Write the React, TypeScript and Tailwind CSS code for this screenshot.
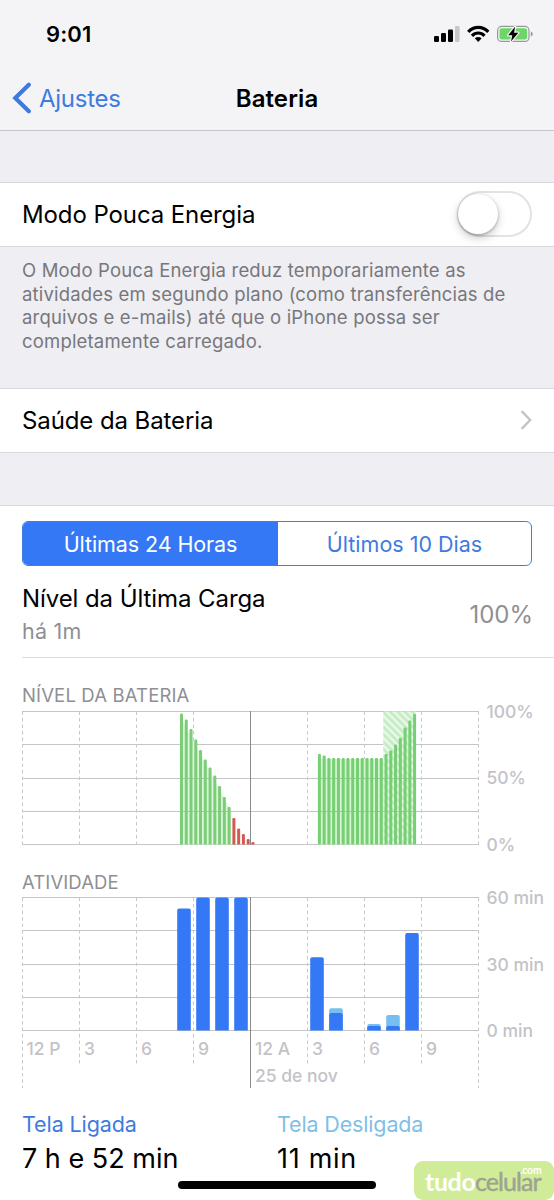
import type { ReactNode } from 'react';

const GRID_X = [22.5, 79.5, 136.5, 193.5, 250.5, 307.5, 364.5, 421.5, 478.5];

const DRAIN = [713.5, 719.5, 729, 739.5, 750, 759.5, 767.5, 775.5, 786, 797, 807];
const LOW = [818, 828.5, 834, 839, 842];
const SECOND = [
  754, 755.5, 758, 758, 758, 758, 758, 758, 758, 758, 758, 758, 758, 758,
  754, 750.5, 744.5, 738, 727.5, 720.5, 714,
];

const ACTIVITY = [
  { x: 177.2, on: 908.5, off: 908.5 },
  { x: 196.2, on: 897.5, off: 897.5 },
  { x: 215.2, on: 897.5, off: 897.5 },
  { x: 234.2, on: 897.5, off: 897.5 },
  { x: 310.2, on: 957.3, off: 957.3 },
  { x: 329.2, on: 1013, off: 1008.3 },
  { x: 367.2, on: 1026, off: 1024 },
  { x: 386.2, on: 1026, off: 1015 },
  { x: 405.2, on: 933, off: 933 },
];

function bar(x: number, y: number, w: number, bottom: number, r: number) {
  const c = Math.min(r, bottom - y);
  return `M${x} ${bottom}V${y + c}Q${x} ${y} ${x + c} ${y}H${x + w - c}Q${x + w} ${y} ${x + w} ${y + c}V${bottom}Z`;
}

function StatusIcons() {
  return (
    <svg className="h-[20px] w-[102px]" viewBox="432 24 102 20">
      <rect x="434" y="36" width="5" height="6" rx="1.3" />
      <rect x="441" y="33" width="5" height="9" rx="1.3" />
      <rect x="448" y="29.5" width="5" height="12.5" rx="1.3" />
      <rect x="455" y="26" width="4.6" height="16" rx="1.3" fill="#c6c6c8" />
      <g fill="none" stroke="#000" strokeWidth="3.2">
        <path d="M468.2 31.8C474 25.8 482.5 25.8 488.3 31.8" />
        <path d="M472 35.8C475.6 32.1 480.9 32.1 484.5 35.8" />
      </g>
      <path d="M474.8 38.3Q478.2 35.8 481.7 38.3L478.2 41.9Z" />
      <rect x="497.6" y="26.4" width="31.4" height="15" rx="4" fill="none" stroke="#98989b" strokeWidth="1.2" />
      <rect x="499.5" y="28.3" width="27.6" height="11.2" rx="2.2" fill="#6cd668" />
      <path d="M530.8 31.5Q532.8 32.2 532.8 34T530.8 36.5Z" fill="#98989b" />
      <path d="M515 26.7L508.2 35.2H512.3L511 41.6L518.4 32.8H514.1Z" stroke="#f4f4f7" strokeWidth="2.4" strokeLinejoin="round" paintOrder="stroke" />
    </svg>
  );
}

function Row({ children, label }: { label: string; children: ReactNode }) {
  return (
    <div className="flex h-[65px] items-center justify-between border-y border-[#d8d8dc] bg-white pr-[22px] pl-[22px]">
      <span className="pt-px text-[24px] tracking-[-0.1px] whitespace-nowrap">{label}</span>
      {children}
    </div>
  );
}

function GridLines({ top, bottom, tail }: { top: number; bottom: number; tail: boolean }) {
  const step = (bottom - top) / 4;
  return (
    <g>
      {[0, 1, 2, 3, 4].map((i) => (
        <path key={i} d={`M22 ${top + Math.round(step * i)}H479`} stroke="#c5c5c8" />
      ))}
      {GRID_X.map((x, i) => {
        const end = !tail ? bottom : i % 4 === 0 ? 1088 : 1063.5;
        return i === 4 ? null : (
          <path key={x} d={`M${x} ${top}V${end}`} stroke="#c8c8cb" strokeDasharray="3.5 3" />
        );
      })}
    </g>
  );
}

function BatteryChart() {
  return (
    <svg className="block h-[150px] w-full overflow-visible" viewBox="0 706 554 150">
      <defs>
        <pattern id="charging" width="5.2" height="5.2" patternUnits="userSpaceOnUse" patternTransform="rotate(-45)">
          <rect width="5.2" height="5.2" fill="#eaf9ea" />
          <rect width="2.9" height="5.2" fill="#c5ecc5" />
        </pattern>
      </defs>
      <GridLines top={711.5} bottom={844.5} tail={false} />
      <path d="M250.5 711V845" stroke="#8a8a8d" />
      <path d="M383.3 711.5H415.8V844.5H383.3Z" fill="url(#charging)" />
      <path d="M181 844.5V718L231 811V844.5Z" fill="#dcf7da" />
      <path d="M318 844.5V759H383.3V844.5Z" fill="#d5f5d2" />
      {[778.5, 811.5].map((y) => (
        <path key={y} d={`M180 ${y}H${y < 800 ? 211 : 231}M318 ${y}H416`} stroke="#9dce9b" />
      ))}
      {DRAIN.map((y, i) => (
        <path key={y} d={bar(180 + i * 4.76, y, 3, 844.5, 1.2)} fill="#7ccd79" />
      ))}
      {LOW.map((y, i) => (
        <path key={y} d={bar(232.4 + i * 4.76, y, 3, 844.5, 1.2)} fill="#d25b51" />
      ))}
      {SECOND.map((y, i) => (
        <path key={i} d={bar(317.9 + i * 4.76, y, 3, 844.5, 1)} fill="#76cf73" />
      ))}
      <g fill="#c3c3c7" fontFamily="Inter, sans-serif" fontSize="17.5" fontWeight="500">
        <text x="486.5" y="717.5">100%</text>
        <text x="486.5" y="784">50%</text>
        <text x="486.5" y="850.5">0%</text>
      </g>
    </svg>
  );
}

function ActivityChart() {
  return (
    <svg className="block h-[200px] w-full overflow-visible" viewBox="0 892 554 200">
      <GridLines top={897.5} bottom={1030.5} tail />
      {ACTIVITY.map((a) => (
        <g key={a.x}>
          {a.off < a.on && <path d={bar(a.x, a.off, 13.6, 1030.5, 2)} fill="#76bff0" />}
          <path d={bar(a.x, a.on, 13.6, 1030.5, 2)} fill="#3478f6" />
        </g>
      ))}
      <path d="M250.5 897V1088" stroke="#8a8a8d" />
      <g fill="#c3c3c7" fontFamily="Inter, sans-serif" fontSize="17.5" fontWeight="500">
        <text x="486.5" y="904">60 min</text>
        <text x="486.5" y="970.5">30 min</text>
        <text x="486.5" y="1037">0 min</text>
        <text x="26.5" y="1055">12 P</text>
        <text x="84" y="1055">3</text>
        <text x="141" y="1055">6</text>
        <text x="198" y="1055">9</text>
        <text x="255" y="1055">12 A</text>
        <text x="312" y="1055">3</text>
        <text x="369" y="1055">6</text>
        <text x="426" y="1055">9</text>
        <text x="255" y="1082">25 de nov</text>
      </g>
    </svg>
  );
}

export default function App() {
  return (
    <div className="relative flex h-[1200px] w-[554px] flex-col overflow-hidden bg-[#eeeef3] font-['Inter',sans-serif] text-black">
      <header className="flex h-[131px] shrink-0 flex-col border-b border-[#c4c4c9] bg-[#f4f4f7]">
        <div className="flex h-[68px] items-center justify-between pr-[20px] pl-[46px]">
          <span className="text-[22px] font-semibold tracking-[0.1px]">9:01</span>
          <StatusIcons />
        </div>
        <div className="grid h-[60px] grid-cols-[1fr_auto_1fr] items-center">
          <div className="flex items-center gap-[7px] pl-[12px] text-[#3e7be0]">
            <svg className="h-[32px] w-[20px]" viewBox="0 0 20 32" fill="none" stroke="currentColor" strokeWidth="4.2" strokeLinecap="round">
              <path d="M16.8 2.7L3.3 16L16.8 29.3" />
            </svg>
            <span className="pt-px text-[24px] tracking-[-0.25px]">Ajustes</span>
          </div>
          <h1 className="pt-px text-[24px] font-semibold tracking-[0.1px]">Bateria</h1>
        </div>
      </header>

      <main className="flex flex-col pt-[51px]">
        <Row label="Modo Pouca Energia">
          <button aria-label="Modo Pouca Energia" className="-mt-[2px] flex h-[46px] w-[75px] items-center rounded-full border-[2.5px] border-[#e3e3e5] bg-white">
            <span className="-ml-px size-[40px] rounded-full bg-white shadow-[0_4px_10px_rgba(0,0,0,0.2),0_1px_3px_rgba(0,0,0,0.28)]" />
          </button>
        </Row>
        <p className="h-[141px] pt-[12px] pl-[22px] text-[18.5px] leading-[23.7px] tracking-[0.18px] whitespace-nowrap text-[#77777c]">
          O Modo Pouca Energia reduz temporariamente as<br />
          atividades em segundo plano (como transferências de<br />
          arquivos e e-mails) até que o iPhone possa ser<br />
          completamente carregado.
        </p>
        <Row label="Saúde da Bateria">
          <svg className="-mt-px h-[20px] w-[12px]" viewBox="0 0 12 20" fill="none" stroke="#c4c4c8" strokeWidth="2.4">
            <path d="M1.6 1.2L10.2 10L1.6 18.8" />
          </svg>
        </Row>

        <section className="mt-[52px] flex flex-col border-t border-[#d8d8dc] bg-white pt-[15px]">
          <div className="mr-[22px] ml-[22px] flex h-[45px] overflow-hidden rounded-[6px] border-[1.5px] border-[#3f7fe0] text-[21.5px]">
            <button className="flex w-[255px] items-center justify-center bg-[#3478f6] pt-px tracking-[-0.1px] text-white">Últimas 24 Horas</button>
            <button className="flex flex-1 items-center justify-center pt-px text-[#3e7be0]">Últimos 10 Dias</button>
          </div>
          <div className="ml-[22px] flex h-[92px] justify-between border-b border-[#dcdcde] pr-[21px]">
            <div className="flex flex-col pt-[18px]">
              <span className="text-[24px] leading-[30px] tracking-[-0.08px]">Nível da Última Carga</span>
              <span className="text-[21.5px] leading-[34px] tracking-[0.2px] text-[#8f8f93]">há 1m</span>
            </div>
            <span className="pt-[34px] text-[24px] leading-[30px] text-[#8f8f93]">100%</span>
          </div>
          <h2 className="pt-[27px] pl-[22px] text-[18.5px] leading-[21px] tracking-[0.15px] text-[#8f8f93]">NÍVEL DA BATERIA</h2>
          <BatteryChart />
          <h2 className="pt-[15px] pl-[22px] text-[18.5px] leading-[23px] tracking-[0.1px] text-[#8f8f93]">ATIVIDADE</h2>
          <div className="-mt-[2px]">
            <ActivityChart />
          </div>
          <div className="grid h-[110px] grid-cols-[255px_1fr] pt-[18px] pl-[22px]">
            <div className="flex flex-col">
              <span className="text-[21.5px] leading-[28px] tracking-[-0.1px] text-[#3e7be0]">Tela Ligada</span>
              <span className="text-[27px] leading-[41px]">7 h e 52 min</span>
            </div>
            <div className="flex flex-col">
              <span className="text-[21.5px] leading-[28px] tracking-[-0.15px] text-[#7fc0e8]">Tela Desligada</span>
              <span className="text-[27px] leading-[41px] tracking-[0.7px]">11 min</span>
            </div>
          </div>
        </section>
      </main>

      <div className="absolute top-[1180.5px] left-[178px] h-[8px] w-[198px] rounded-full bg-black" />
      <div className="absolute top-[1161px] left-[414px] h-[39px] w-[140px] rounded-[9px] bg-[#d0ec98]">
        <div className="flex pt-[13px] pl-[11px] font-['Lato',sans-serif] text-[25px] leading-[14px]">
          <span className="w-[50px] font-bold tracking-[-0.4px] text-white">tudo</span>
          <span className="tracking-[-0.95px] text-[#9fa392] [-webkit-text-stroke:0.5px_#9fa392]">celular</span>
        </div>
        <span className="absolute top-[4px] left-[106px] font-['Lato',sans-serif] text-[10.5px] leading-[10px] font-bold tracking-[-0.2px] text-white">.com</span>
      </div>
    </div>
  );
}
